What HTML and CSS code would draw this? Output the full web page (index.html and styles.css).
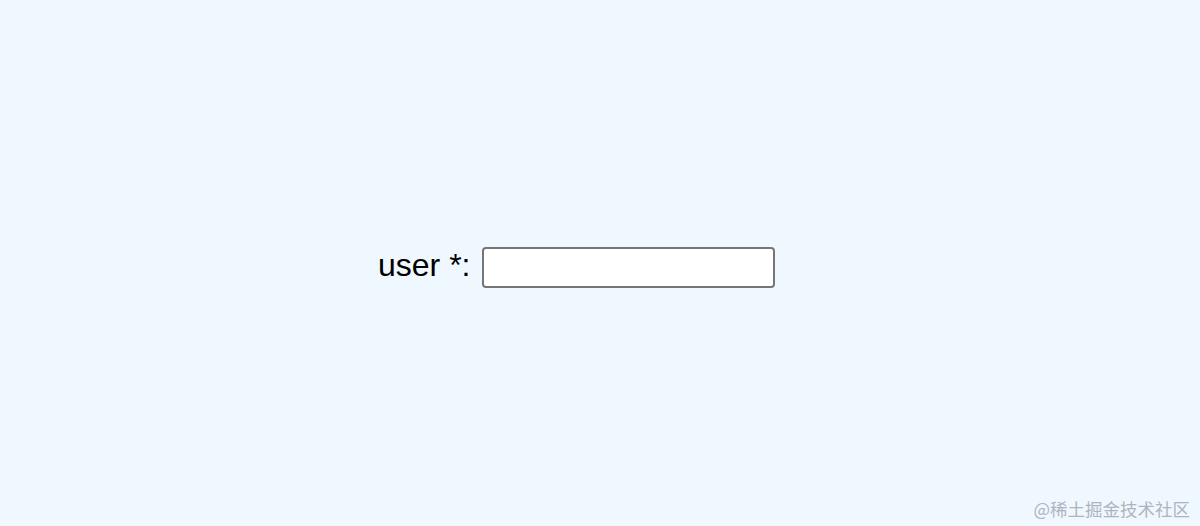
FILE: index.html
```html
<!DOCTYPE html>
<html>
<head>
<meta charset="utf-8">
<link rel="stylesheet" href="styles.css">
</head>
<body>
<main class="page">
  <form class="form-row">
    <label class="label" for="user">user *:</label>
    <input class="field" id="user" type="text">
  </form>
</main>
<div class="watermark">@稀土掘金技术社区</div>
</body>
</html>
```
FILE: styles.css
```css
html, body {
  margin: 0;
  padding: 0;
  height: 100%;
}
body {
  background: #f0f8ff;
  font-family: "Liberation Sans", Arial, sans-serif;
  overflow: hidden;
}
.page {
  height: 526px;
  display: flex;
  align-items: flex-start;
  justify-content: flex-start;
  padding: 247px 0 0 378px;
  box-sizing: border-box;
}
.form-row {
  display: flex;
  align-items: center;
  gap: 12px;
  margin: 0;
}
.label {
  font-size: 32px;
  color: #000;
  line-height: 37px;
  padding-bottom: 4px;
}
.field {
  width: 293px;
  height: 41px;
  box-sizing: border-box;
  border: 2px solid #767676;
  border-radius: 4px;
  background: #fff;
  margin: 0;
  padding: 0 6px;
  font-size: 16px;
}
.watermark {
  position: absolute;
  right: 10px;
  bottom: 5px;
  font-family: "Noto Sans CJK SC", "Noto Sans", sans-serif;
  font-size: 17.5px;
  color: #aeb4bd;
}
```
